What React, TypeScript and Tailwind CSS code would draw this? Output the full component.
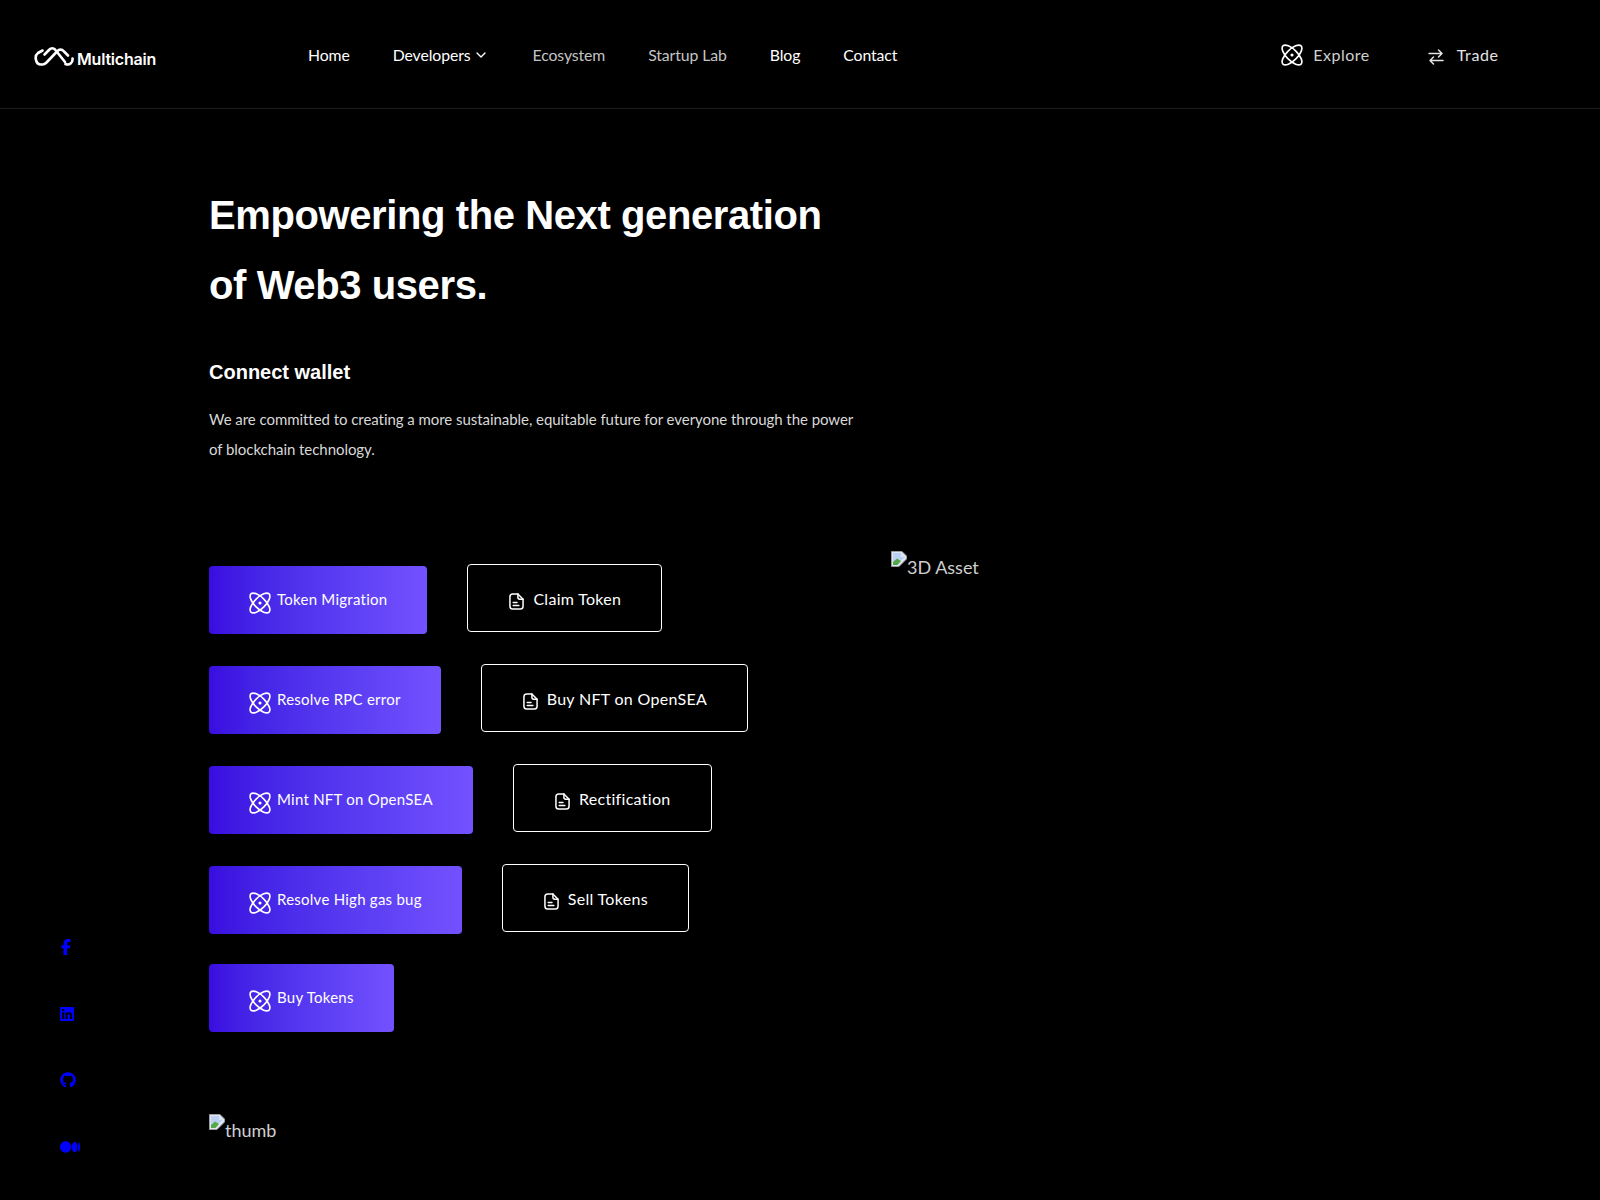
import { ChevronDown } from "lucide-react";
import { FaFacebookF, FaGithub, FaLinkedin, FaMedium } from "react-icons/fa6";

const lato = "font-['Lato','Liberation_Sans',sans-serif]";

function AtomIcon({ className }: { className?: string }) {
  return (
    <svg viewBox="0 0 24 24" fill="none" stroke="currentColor" strokeWidth="1.8" className={className}>
      <ellipse cx="12" cy="12" rx="14" ry="6" transform="rotate(45 12 12)" />
      <ellipse cx="12" cy="12" rx="14" ry="6" transform="rotate(-45 12 12)" />
      <circle cx="12" cy="12" r="1.7" fill="currentColor" stroke="none" />
    </svg>
  );
}

function FileIcon() {
  return (
    <svg viewBox="0 0 16 18" fill="none" stroke="currentColor" strokeWidth="1.6" strokeLinecap="round" strokeLinejoin="round" className="mt-1 h-[17px] w-[15px]">
      <path d="M9.5 1H4a3 3 0 0 0-3 3v10a3 3 0 0 0 3 3h8a3 3 0 0 0 3-3V6.5L9.5 1Z" />
      <path d="M9.5 1v3.5a2 2 0 0 0 2 2H15" />
      <path d="M4.5 10h4M4.5 13.2h6" />
    </svg>
  );
}

function BrokenImage() {
  return (
    <svg viewBox="0 0 16 16" className="h-4 w-4 shrink-0">
      <path d="M0.5 0.5H11L15.5 5V8L8 15.5H0.5Z" fill="#dfe6f3" stroke="#9a9a9a" />
      <path d="M2 2H10V6H14L8 11H2Z" fill="#bcd0f4" />
      <path d="M2 11L6 7.5L10 10L6.5 14H2Z" fill="#55a84a" />
      <path d="M10 15L16 9V15Z" fill="#000" />
    </svg>
  );
}

function Logo() {
  return (
    <svg viewBox="0 0 40 20" fill="none" stroke="white" strokeWidth="2.6" strokeLinecap="round" strokeLinejoin="round" className="h-[21px] w-[40px]">
      <path d="M8.5 4 4 6.5C0 9.5 1.5 18 7 18h1.5c2 0 3-1 4-2L23 5c2-2.5 5-2.5 7 0l4 4" />
      <path d="M10.5 8 15.5 3c1.5-1.5 4-1.5 5.5 0L31 15.5" />
      <path d="M31.5 17.5c4 1.5 7.5-1 7-5.5" />
    </svg>
  );
}

const navLinks = [
  { label: "Home", tone: "text-white" },
  { label: "Developers", tone: "text-white", caret: true },
  { label: "Ecosystem", tone: "text-[#c4c4c4]" },
  { label: "Startup Lab", tone: "text-[#c4c4c4]" },
  { label: "Blog", tone: "text-white" },
  { label: "Contact", tone: "text-white" },
];

const rows: { primary: string; outline?: string }[] = [
  { primary: "Token Migration", outline: "Claim Token" },
  { primary: "Resolve RPC error", outline: "Buy NFT on OpenSEA" },
  { primary: "Mint NFT on OpenSEA", outline: "Rectification" },
  { primary: "Resolve High gas bug", outline: "Sell Tokens" },
  { primary: "Buy Tokens" },
];

function Header() {
  return (
    <header className="flex h-[109px] items-center border-b border-[#1c1c1c] pl-[34px]">
      <a className="mt-1 flex w-[274px] items-center gap-[3px]">
        <Logo />
        <span className="mt-1.5 font-['Inter',sans-serif] text-base font-semibold tracking-[-0.2px] text-white">Multichain</span>
      </a>
      <nav className="mt-0.5 flex items-center gap-[43px] tracking-[-0.1px]">
        {navLinks.map((link) => (
          <a key={link.label} className={`flex items-center gap-[3px] text-[15.8px] ${link.tone}`}>
            {link.label}
            {link.caret && <ChevronDown size={16} strokeWidth={2} />}
          </a>
        ))}
      </nav>
      <div className="ml-[384px] mt-0.5 flex items-center gap-[10px] text-[#d0d0d0]">
        <AtomIcon className="h-[22px] w-[22px] text-white" />
        <span className="tracking-[0.5px]">Explore</span>
      </div>
      <div className="ml-[57px] mt-0.5 flex items-center gap-3 text-[#e4e4e4]">
        <svg viewBox="0 0 18 18" fill="none" stroke="currentColor" strokeWidth="1.5" strokeLinecap="round" strokeLinejoin="round" className="mt-1 h-[18px] w-[18px]">
          <path d="M2 5.5h13M11.5 2 15 5.5 11.5 9M16 12.5H3M6.5 9 3 12.5 6.5 16" />
        </svg>
        <span className="tracking-[0.6px]">Trade</span>
      </div>
    </header>
  );
}

function Socials() {
  return (
    <aside className="flex w-[209px] shrink-0 flex-col items-start justify-end gap-[46.7px] pb-[43px] pl-[60px] text-[#0000ff]">
      <FaFacebookF size={16} className="-ml-[2px] my-0.5" />
      <FaLinkedin size={16} className="-ml-[1px] my-0.5" />
      <FaGithub size={16} className="my-0.5" />
      <FaMedium size={20} />
    </aside>
  );
}

function Buttons() {
  return (
    <div className="flex flex-col">
      {rows.map((row, i) => (
        <div key={row.primary} className={`flex items-start gap-10 ${i === 3 ? "mb-[30px]" : "mb-8"}`}>
          <a className="flex h-[68px] items-center gap-1.5 rounded bg-gradient-to-r from-[#3a0ce0] to-[#7351ff] px-10 pb-0.5 text-[15px] tracking-[0.25px] text-white">
            <AtomIcon className="mt-[8px] h-[22px] w-[22px]" />
            {row.primary}
          </a>
          {row.outline && (
            <a className="-mt-0.5 flex h-[68px] items-center gap-[9px] rounded border border-white bg-black pl-[41px] pr-10 pt-0.5 text-base tracking-[0.3px] text-white">
              <FileIcon />
              {row.outline}
            </a>
          )}
        </div>
      ))}
    </div>
  );
}

export default function App() {
  return (
    <div className={`flex h-[1200px] flex-col overflow-hidden bg-black text-base text-white ${lato}`}>
      <Header />
      <div className="flex flex-1">
        <Socials />
        <main className="flex-1 pt-[71px]">
          <h1 className="font-['Liberation_Sans',sans-serif] text-[40px] font-bold leading-[70px] tracking-[-0.4px]">
            Empowering the Next generation
            <br />
            of Web3 users.
          </h1>
          <h2 className="mt-[38px] font-['Liberation_Sans',sans-serif] text-xl font-bold leading-7">Connect wallet</h2>
          <p className="mt-[18px] w-[660px] text-[15px] leading-[30px] tracking-[-0.05px] text-[#d8d8d8]">
            We are committed to creating a more sustainable, equitable future for everyone through the power of blockchain technology.
          </p>
          <div className="mt-[102px] flex items-start">
            <div className="w-[682px]">
              <Buttons />
              <div className="mt-[50px] flex items-start text-[18px] leading-6 text-[#cfcfcf]">
                <BrokenImage />
                <span className="mt-1">thumb</span>
              </div>
            </div>
            <div className="-mt-[15px] flex items-start text-[18px] leading-6 text-[#cfcfcf]">
              <BrokenImage />
              <span className="mt-1">3D Asset</span>
            </div>
          </div>
        </main>
      </div>
    </div>
  );
}
